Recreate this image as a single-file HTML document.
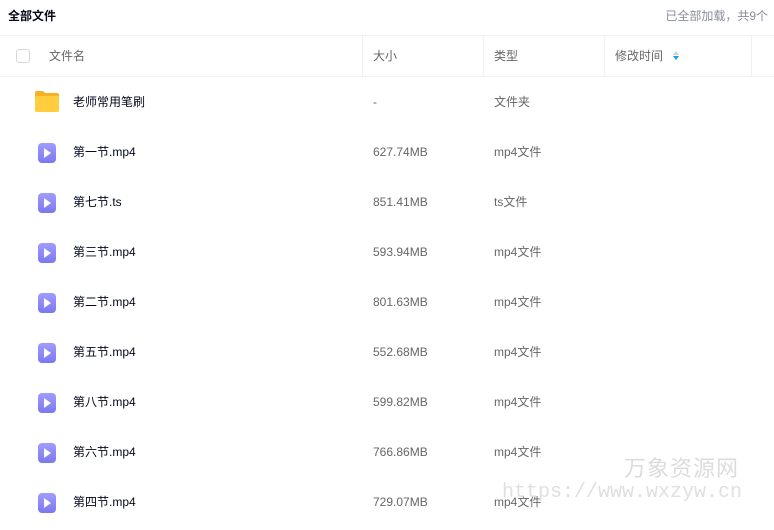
<!DOCTYPE html>
<html><head><meta charset="utf-8"><style>
body{margin:0;width:774px;height:530px;overflow:hidden;background:#fff;font-family:"Liberation Sans","Noto Sans CJK SC",sans-serif;font-size:12px;line-height:16px;color:#424e67;position:relative}
.title{position:absolute;left:8px;top:8px;font-weight:bold;color:#03081a;font-size:12px}
.count{position:absolute;right:6px;top:8px;color:#878c9c;font-size:12px}
.hdr{position:absolute;left:0;top:35px;width:774px;height:40px;border-top:1px solid #f0f0f2;border-bottom:1px solid #f0f0f2;color:#666}
.hdr div{position:absolute;top:12px;line-height:16px}
.sep{position:absolute;top:0;width:1px;height:40px;background:#f0f0f2}
.cb{position:absolute;left:16px;width:12px;height:12px;border:1px solid #d4d7de;border-radius:3px}
.row{position:absolute;left:0;width:774px;height:50px}
.row span{position:absolute;top:17px;line-height:16px;height:16px}
.n{left:73px;color:#03081a}
.s{left:373px;color:#666}
.t{left:494px;color:#666}
.vi{position:absolute;left:38px;top:16px;width:18px;height:20px;border-radius:4px;background:linear-gradient(#a09cff,#7b78f0)}
.vi:after{content:"";position:absolute;left:6px;top:5px;border-left:7px solid #fff;border-top:5px solid transparent;border-bottom:5px solid transparent}
.wm1{position:absolute;left:624px;top:455px;font-size:22px;line-height:28px;color:#dcdcdc;letter-spacing:1px}
.wm2{position:absolute;left:502px;top:481px;font-size:20px;line-height:24px;color:#e0e0e0;font-family:"Liberation Mono",monospace}
</style></head><body>
<div class="title">全部文件</div>
<div class="count">已全部加载，共9个</div>
<div class="hdr">
<div class="cb" style="top:13px"></div>
<div style="left:49px">文件名</div>
<span class="sep" style="left:362px"></span><div style="left:373px">大小</div>
<span class="sep" style="left:483px"></span><div style="left:494px">类型</div>
<span class="sep" style="left:604px"></span><div style="left:615px">修改时间</div>
<div style="left:673px;top:15px;width:0;height:0;border-left:3px solid transparent;border-right:3px solid transparent;border-bottom:4px solid #d0d0d0"></div>
<div style="left:673px;top:20px;width:0;height:0;border-left:3px solid transparent;border-right:3px solid transparent;border-top:4px solid #1a9cf3"></div>
<span class="sep" style="left:751px"></span>
</div>
<div class="row" style="top:77px">
<svg style="position:absolute;left:35px;top:14px" width="24" height="21" viewBox="0 0 24 21"><path d="M0 2a2 2 0 0 1 2-2h6l2 2h12a2 2 0 0 1 2 2v15a2 2 0 0 1-2 2H2a2 2 0 0 1-2-2z" fill="#f5b324"/><rect x="0" y="5" width="24" height="16" rx="2" fill="#ffcd3e"/></svg>
<span class="n">老师常用笔刷</span><span class="s">-</span><span class="t">文件夹</span></div>
<div class="row" style="top:127px"><i class="vi"></i><span class="n">第一节.mp4</span><span class="s">627.74MB</span><span class="t">mp4文件</span></div>
<div class="row" style="top:177px"><i class="vi"></i><span class="n">第七节.ts</span><span class="s">851.41MB</span><span class="t">ts文件</span></div>
<div class="row" style="top:227px"><i class="vi"></i><span class="n">第三节.mp4</span><span class="s">593.94MB</span><span class="t">mp4文件</span></div>
<div class="row" style="top:277px"><i class="vi"></i><span class="n">第二节.mp4</span><span class="s">801.63MB</span><span class="t">mp4文件</span></div>
<div class="row" style="top:327px"><i class="vi"></i><span class="n">第五节.mp4</span><span class="s">552.68MB</span><span class="t">mp4文件</span></div>
<div class="row" style="top:377px"><i class="vi"></i><span class="n">第八节.mp4</span><span class="s">599.82MB</span><span class="t">mp4文件</span></div>
<div class="row" style="top:427px"><i class="vi"></i><span class="n">第六节.mp4</span><span class="s">766.86MB</span><span class="t">mp4文件</span></div>
<div class="row" style="top:477px"><i class="vi"></i><span class="n">第四节.mp4</span><span class="s">729.07MB</span><span class="t">mp4文件</span></div>
<div class="wm1">万象资源网</div>
<div class="wm2">https://www.wxzyw.cn</div>
</body></html>
